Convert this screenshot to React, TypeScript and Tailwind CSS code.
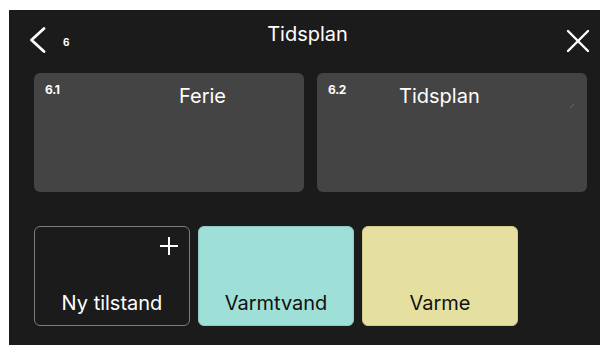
const font = { fontFamily: 'Inter, "Noto Sans", sans-serif' }

const menus = [
  { id: '6.1', title: 'Ferie', pad: 'pl-[145px]' },
  { id: '6.2', title: 'Tidsplan', pad: 'pl-[82px]' },
]

const modes = [
  { label: 'Varmtvand', cls: 'bg-[#9edfd7] text-[#111] border-[#8fc9c2]' },
  { label: 'Varme', cls: 'bg-[#e6e0a0] text-[#111] border-[#cfc98f]' },
]

export default function App() {
  return (
    <div className="w-[600px] h-[345px] bg-white pl-[9px] pt-[10px]" style={font}>
      <div className="w-full h-full bg-[#1b1b1b] flex flex-col text-white">
        {/* header */}
        <div className="h-[63px] flex items-start pl-[20px] pr-[10px]">
          <div className="flex items-start w-[120px]">
            <svg width="17" height="26" viewBox="0 0 17 26" className="mt-[17px]">
              <polyline points="15,1.5 2.5,13 15,24.5" fill="none" stroke="white" strokeWidth="2.8" strokeLinecap="round" strokeLinejoin="round" />
            </svg>
            <span className="ml-[17px] mt-[26px] text-[10px] leading-[12px] font-bold">6</span>
          </div>
          <div className="flex-1 text-center text-[20px] leading-[24px] mt-[12px] pr-[4px]">Tidsplan</div>
          <div className="w-[120px] flex justify-end">
            <svg width="24" height="24" viewBox="0 0 24 24" className="mt-[19px]">
              <path d="M2 2 L22 22 M22 2 L2 22" stroke="white" strokeWidth="2.4" strokeLinecap="round" />
            </svg>
          </div>
        </div>

        {/* menu cards */}
        <div className="flex gap-[13px] pl-[25px]">
          {menus.map((m) => (
            <div key={m.id} className={`relative w-[270px] h-[119px] rounded-[6px] bg-[#444444] pt-[11px] ${m.pad}`}>
              <span className="absolute left-[11px] top-[10px] text-[12px] leading-[14px] font-bold tracking-tight">{m.id}</span>
              <div className="text-[20px] leading-[24px]">{m.title}</div>
              {m.id === '6.2' && (
                <svg width="4" height="4" viewBox="0 0 4 4" className="absolute right-[13px] top-[31px]">
                  <path d="M0 4 L4 0" stroke="#6a6a6a" strokeWidth="1" />
                </svg>
              )}
            </div>
          ))}
        </div>

        {/* mode buttons */}
        <div className="flex gap-[8px] pl-[25px] mt-[34px]">
          <div className="relative w-[156px] h-[100px] rounded-[6px] border-[1.5px] border-[#7c7c7c] flex items-end justify-center pb-[10px]">
            <svg width="20" height="20" viewBox="0 0 20 20" className="absolute right-[10px] top-[9px]">
              <path d="M10 1 V19 M1 10 H19" stroke="white" strokeWidth="2" />
            </svg>
            <span className="text-[20px] leading-[24px]">Ny tilstand</span>
          </div>
          {modes.map((m) => (
            <div key={m.label} className={`w-[156px] h-[100px] rounded-[6px] border flex items-end justify-center pb-[10px] ${m.cls}`}>
              <span className="text-[20px] leading-[24px]">{m.label}</span>
            </div>
          ))}
        </div>
      </div>
    </div>
  )
}
